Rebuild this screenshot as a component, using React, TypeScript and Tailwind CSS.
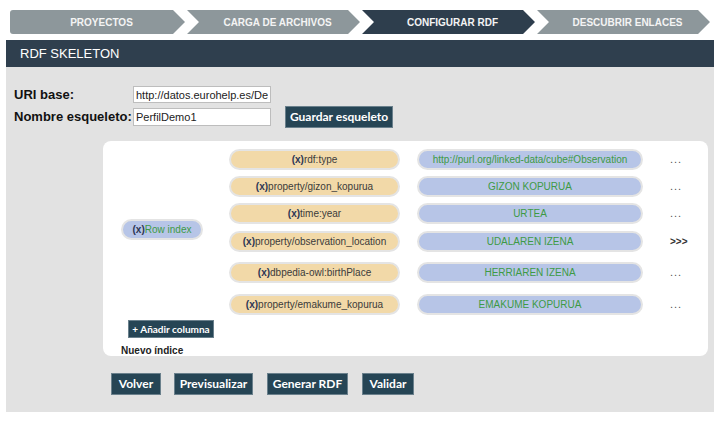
import React from "react";

const steps = [
  { label: "PROYECTOS", active: false, first: true },
  { label: "CARGA DE ARCHIVOS", active: false },
  { label: "CONFIGURAR RDF", active: true },
  { label: "DESCUBRIR ENLACES", active: false },
];

const rows = [
  { prop: "rdf:type", value: "http://purl.org/linked-data/cube#Observation", more: "...", mt: "mt-0" },
  { prop: "property/gizon_kopurua", value: "GIZON KOPURUA", more: "...", mt: "mt-[6px]" },
  { prop: "time:year", value: "URTEA", more: "...", mt: "mt-[6px]" },
  { prop: "property/observation_location", value: "UDALAREN IZENA", more: ">>>", mt: "mt-[7px]" },
  { prop: "dbpedia-owl:birthPlace", value: "HERRIAREN IZENA", more: "...", mt: "mt-[10px]" },
  { prop: "property/emakume_kopurua", value: "EMAKUME KOPURUA", more: "...", mt: "mt-[11px]" },
];

const sans = "font-['Liberation_Sans',Arial,sans-serif]";

function Step({ label, active, first }: { label: string; active: boolean; first?: boolean }) {
  return (
    <div
      className={`h-[24px] flex items-center justify-center text-[10px] font-bold text-[#f4f4f4] ${
        active ? "bg-[#2e3e4d]" : "bg-[#8d979b]"
      } ${
        first
          ? "w-[175px] pl-[8px] rounded-l-[3px] [clip-path:polygon(0_0,calc(100%-12px)_0,100%_50%,calc(100%-12px)_100%,0_100%)]"
          : "w-[173px] pl-[8px] [clip-path:polygon(0_0,calc(100%-12px)_0,100%_50%,calc(100%-12px)_100%,0_100%,12px_50%)]"
      }`}
    >
      {label}
    </div>
  );
}

function Pill({ children, tone, className = "" }: { children: React.ReactNode; tone: "orange" | "blue"; className?: string }) {
  return (
    <div
      className={`h-[21px] rounded-full border-2 border-[#e4e4e4] flex items-center justify-center text-[10px] whitespace-nowrap ${
        tone === "orange" ? "bg-[#f2d9a8] text-[#3b3b3b]" : "bg-[#b7c5e7] text-[#3d9a45]"
      } ${className}`}
    >
      {children}
    </div>
  );
}

function DarkButton({ children, className = "" }: { children: React.ReactNode; className?: string }) {
  return (
    <button
      className={`bg-[#264555] border border-[#6a808c] text-white font-bold font-['Lato',sans-serif] whitespace-nowrap ${className}`}
    >
      {children}
    </button>
  );
}

export default function App() {
  return (
    <div className={`w-[724px] h-[422px] bg-white ${sans}`}>
      <div className="flex gap-[2px] pt-[10px] pl-[10px]">
        {steps.map((s) => (
          <Step key={s.label} label={s.label} active={s.active} first={s.first} />
        ))}
      </div>

      <div className="mx-[6px] mt-[6px] w-[708px]">
        <div className="h-[27px] bg-[#2f3f4e] flex items-center pl-[14px] text-white text-[13px]">
          RDF SKELETON
        </div>

        <div className="bg-[#e2e2e2] h-[345px] pt-[19px]">
          <div className="flex items-center h-[17px] pl-[8px]">
            <span className="w-[119px] font-bold text-[13px] text-[#111]">URI base:</span>
            <input
              readOnly
              value="http://datos.eurohelp.es/Demo"
              className="w-[138px] h-[17px] bg-white border border-[#bdbdbd] px-[2px] text-[11px] text-[#222] outline-none"
            />
          </div>
          <div className="flex items-center h-[22px] mt-[3px] pl-[8px]">
            <span className="w-[119px] font-bold text-[13px] text-[#111]">Nombre esqueleto:</span>
            <input
              readOnly
              value="PerfilDemo1"
              className="w-[138px] h-[18px] bg-white border border-[#bdbdbd] px-[2px] text-[11px] text-[#222] outline-none"
            />
            <DarkButton className="ml-[14px] w-[108px] h-[22px] text-[12px]">Guardar esqueleto</DarkButton>
          </div>

          <div className="ml-[97px] mt-[13px] w-[605px] h-[215px] bg-white rounded-[8px] pt-[8px] pl-[18px]">
            <div className="flex">
              <div className="w-[108px] pt-[70px]">
                <Pill tone="blue" className="w-[82px]">
                  <b className="text-[#2c3654]">(x)</b>Row index
                </Pill>
              </div>
              <div>
                {rows.map((r) => (
                  <div key={r.prop} className={`flex items-center ${r.mt}`}>
                    <Pill tone="orange" className="w-[171px]">
                      <b className="text-[#2c3654]">(x)</b>
                      {r.prop}
                    </Pill>
                    <Pill tone="blue" className="w-[226px] ml-[17px]">
                      {r.value}
                    </Pill>
                    <span
                      className={`ml-[27px] ${
                        r.more === ">>>" ? "text-[10px] text-[#333] font-bold" : "text-[11px] tracking-[1px] text-[#555]"
                      }`}
                    >
                      {r.more}
                    </span>
                  </div>
                ))}
              </div>
            </div>
            <DarkButton className="ml-[7px] mt-[5px] w-[86px] h-[18px] text-[10px]">
              + Añadir columna
            </DarkButton>
            <div className="text-[10px] font-bold text-[#222] mt-[3px]">Nuevo índice</div>
          </div>

          <div className="flex mt-[17px] pl-[105px]">
            <DarkButton className="w-[50px] h-[22px] text-[12px]">Volver</DarkButton>
            <DarkButton className="ml-[13px] w-[79px] h-[22px] text-[12px]">Previsualizar</DarkButton>
            <DarkButton className="ml-[14px] w-[81px] h-[22px] text-[12px]">Generar RDF</DarkButton>
            <DarkButton className="ml-[14px] w-[52px] h-[22px] text-[12px]">Validar</DarkButton>
          </div>
        </div>
      </div>
    </div>
  );
}
